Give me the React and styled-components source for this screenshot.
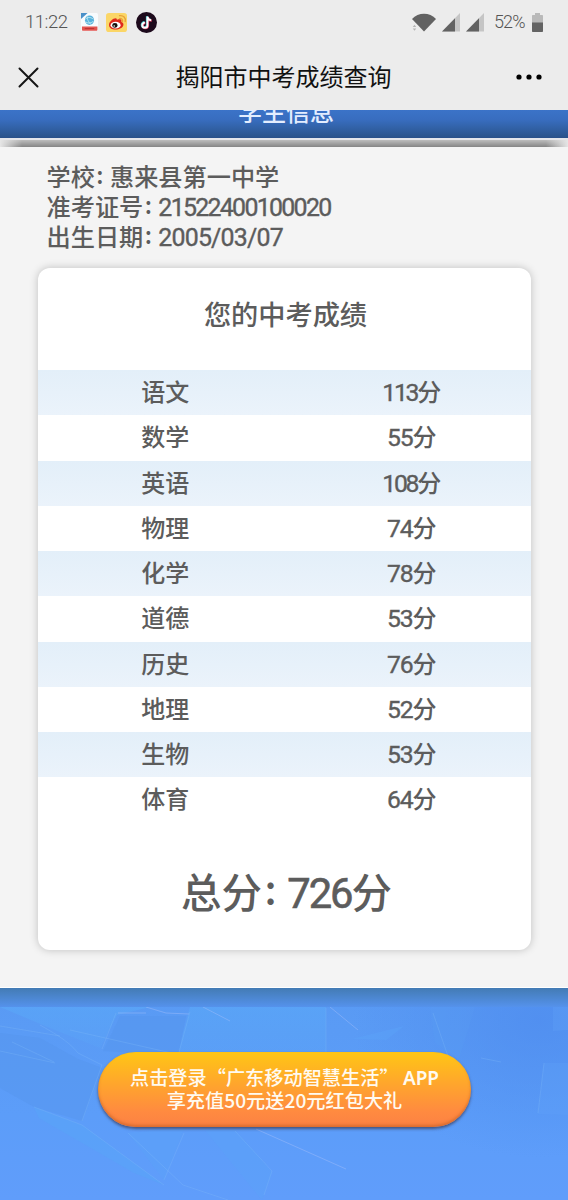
import React from 'react'
import styled, { createGlobalStyle } from 'styled-components'

const GlobalStyle = createGlobalStyle`
* { box-sizing: border-box; }
body {
  margin: 0;
  background: #f4f4f4;
  font-family: "Noto Sans CJK SC", "Noto Sans", sans-serif;
  color: #5c5c5c;
}
svg { display: block; flex: none; }
`

const Page = styled.div`
width: 568px;
height: 1200px;
display: flex;
flex-direction: column;
overflow: hidden;
`

const Top = styled.header`
height: 110px;
flex: none;
background: #ececec;
`

const StatusBar = styled.div`
height: 44px;
display: flex;
align-items: center;
justify-content: space-between;
padding: 0 25px 0 25px;
font-family: Roboto, sans-serif;
font-size: 18.5px;
font-weight: 300;
color: #555;
`

const StatusGroup = styled.div`
display: flex;
align-items: center;
gap: ${props => props.$gap};
`

const Clock = styled.span`
width: 47px;
line-height: 44px;
letter-spacing: -0.5px;
white-space: nowrap;
`

const Percent = styled.span`
width: 32px;
margin-left: 4px;
line-height: 44px;
font-size: 18px;
letter-spacing: -0.9px;
`

const TitleBar = styled.div`
height: 66px;
display: flex;
align-items: center;
justify-content: space-between;
padding: 0 26px 0 18px;
`

const PageTitle = styled.h1`
margin: -2px 0 0;
padding-left: 12px;
font-size: 24px;
font-weight: 400;
line-height: 64px;
color: #111;
`

const Banner = styled.div`
height: 30px;
flex: none;
overflow: hidden;
text-align: center;
background: linear-gradient(#3b73c8 0%, #386dbf 35%, #2b568f 92%, #29508a 100%);
border-bottom: 2px solid #e4e6ea;
color: #e3edff;
`

const BannerText = styled.div`
margin-top: -17px;
padding-left: 4px;
font-size: 24px;
font-weight: 500;
line-height: 36px;
`

const BannerShadow = styled.div`
height: 7px;
flex: none;
background:
  linear-gradient(90deg, #e6e6e6 0, rgba(230, 230, 230, 0) 22px, rgba(230, 230, 230, 0) 546px, #e6e6e6 100%),
  linear-gradient(#bdbdbd, #858585);
`

const Main = styled.main`
height: 841px;
flex: none;
padding: 14px 37px 0 38px;
background: #f4f4f4;
border-bottom: 1px solid #fff;
`

const Info = styled.div`
height: 107px;
padding-left: 8.5px;
font-size: 24.2px;
font-weight: 500;
line-height: 29px;
`

const InfoLine = styled.div`
height: 30px;
white-space: pre;
`

const Colon = styled.span`
position: relative;
top: -0.08em;
padding: 0 0.04em 0 0.06em;
`

const Digits = styled.span`
font-family: Roboto, sans-serif;
font-size: 1.03em;
font-weight: 400;
-webkit-text-stroke: 0.015em currentColor;
letter-spacing: ${props => props.$spacing || '-1.3px'};
`

const Card = styled.section`
height: 682px;
border-radius: 12px;
background: #fff;
box-shadow: 0 0 8px rgba(0, 0, 0, 0.22);
`

const CardTitle = styled.h2`
margin: 0;
height: 102px;
padding-left: 2px;
font-size: 27.2px;
font-weight: 500;
line-height: 90px;
text-align: center;
`

const Row = styled.div`
height: 45.25px;
display: flex;
font-size: 24px;
font-weight: 500;
line-height: 41px;
background: ${props => props.$striped ? 'linear-gradient(#e3eff9, #ebf3fb)' : '#fff'};
`

const Cell = styled.div`
flex: 1;
padding-left: 8px;
text-align: center;
`

const Total = styled.div`
margin-top: 38px;
padding-left: 4px;
font-size: 40.5px;
font-weight: 500;
line-height: 59px;
text-align: center;
white-space: pre;
`

const Footer = styled.footer`
position: relative;
height: 212px;
flex: none;
display: flex;
justify-content: center;
padding: 64px 0 0 1px;
background: linear-gradient(#599af3, #5c9df9 60%, #609dfb);
`

const Backdrop = styled.svg`
position: absolute;
left: 0;
top: 0;
`

const AppButton = styled.button`
position: relative;
width: 373px;
height: 75px;
padding: 0 0 1px;
border: 0;
border-radius: 38px;
background: linear-gradient(#ffc615 0%, #ffa62c 42%, #ff8a40 80%, #fb8144 100%);
box-shadow: 0 2px 3px rgba(60, 60, 90, 0.75), inset 0 -2px 3px rgba(190, 90, 30, 0.55);
font-family: inherit;
font-size: 19.2px;
font-weight: 500;
line-height: 23px;
color: #fffaf0;
white-space: nowrap;
`

const Latin = styled.span`
font-family: "Noto Sans", sans-serif;
font-size: 19px;
line-height: 1;
font-weight: 600;
`

const scores = [
  ['语文', 113],
  ['数学', 55],
  ['英语', 108],
  ['物理', 74],
  ['化学', 78],
  ['道德', 53],
  ['历史', 76],
  ['地理', 52],
  ['生物', 53],
  ['体育', 64],
]

const MobileIcon = () => (
  <svg width='17' height='18' viewBox='0 0 18 18' preserveAspectRatio='none'>
    <rect width='18' height='18' rx='1.5' fill='#f8fbfd' />
    <path d='M0 0h7L0 6z' fill='#4a90c8' />
    <circle cx='9' cy='7.2' r='4.8' fill='#58b2dc' />
    <path d='M5 6c2-2 5-2 8 0M5 9c3 1.6 5 1.4 8-.6M7 3.5c-1 3 1 5 3.5 8' fill='none' stroke='#c4ecf2' strokeWidth='.9' />
    <path d='M1 13.6h16.4v2.8c0 .8-.4 1.4-1.2 1.4h-14c-.8 0-1.2-.6-1.2-1.4z' fill='#e25550' />
    <path d='M4 15.6h10' stroke='#b9302f' />
  </svg>
)

const WeiboIcon = () => (
  <svg width='21' height='19' viewBox='0 0 21 20' preserveAspectRatio='none'>
    <rect width='21' height='20' rx='3' fill='#fbd667' />
    <path d='M3 12.5C3 9 7 5.4 9.6 5.4c1.6 0 1.3 1.9 1.3 1.9s4.4-1.9 4.6 1.1c0 .7-.2 1.2-.2 1.2 1.6.5 2.3 1.6 2.1 3-.5 3-4.2 4.7-7.7 4.7C6 17.3 3 15.7 3 12.5z' fill='#df2a1d' />
    <ellipse cx='9.6' cy='12.8' rx='5' ry='3.5' fill='#fff' />
    <circle cx='8.9' cy='13' r='2.6' fill='#17120f' />
    <circle cx='8.2' cy='13.6' r='.8' fill='#fff' />
    <path d='M13.5 5.8c2-.3 3.4 1.1 3 3M13.5 2.8c3.8-.6 6.7 2.4 5.7 6.2' fill='none' stroke='#e8a23a' strokeWidth='1.3' strokeLinecap='round' />
  </svg>
)

const DouyinIcon = () => (
  <svg width='21' height='21' viewBox='0 0 21 21'>
    <circle cx='10.5' cy='10.5' r='10.5' fill='#1d0a1c' />
    <g fill='none' strokeWidth='2.2'>
      <path d='M11 4.2v8.6a2.6 2.6 0 1 1-2.6-2.6M11 4.5c.3 2 1.7 3.3 3.7 3.4' stroke='#45cfd4' />
      <path d='M12 5v8.6a2.6 2.6 0 1 1-2.6-2.6M12 5.3c.3 2 1.7 3.3 3.7 3.4' stroke='#e2365c' />
      <path d='M11.5 4.6v8.6a2.6 2.6 0 1 1-2.6-2.6M11.5 4.9c.3 2 1.7 3.3 3.7 3.4' stroke='#fff' strokeWidth='1.9' />
    </g>
  </svg>
)

const WifiIcon = () => (
  <svg width='24' height='19' viewBox='0 0 25 19' preserveAspectRatio='none'>
    <path d='M0 6C6.5-1 18.5-1 25 6L12.5 18.5z' fill='#626262' />
    <path d='M.8 14L2.6 11.7 4.4 14zM.8 15.5h3.6L2.6 17.8z' fill='#b4b4b4' />
  </svg>
)

const SignalIcon = () => (
  <svg width='18' height='19' viewBox='0 0 18 19'>
    <path d='M0 18.5L18 0v18.5z' fill='#c5c5c5' />
    <path d='M0 18.5L13 5.2v13.3z' fill='#626262' />
  </svg>
)

const BatteryIcon = () => (
  <svg width='11' height='19' viewBox='0 0 11 19'>
    <path d='M3 0h5v2h2c.6 0 1 .4 1 1v7H0V3c0-.6.4-1 1-1h2z' fill='#b9b9b9' />
    <path d='M0 9.5h11V18c0 .6-.4 1-1 1H1c-.6 0-1-.4-1-1z' fill='#636363' />
  </svg>
)

const FooterArt = () => (
  <Backdrop width='568' height='212' viewBox='0 0 568 212'>
    <defs>
      <linearGradient id='edge' x1='0' y1='0' x2='0' y2='1'>
        <stop offset='0' stopColor='#437bb4' />
        <stop offset='1' stopColor='#5592ec' />
      </linearGradient>
      <radialGradient id='deep' cx='0.9' cy='0.15' r='0.65'>
        <stop offset='0' stopColor='#4f8def' stopOpacity='.8' />
        <stop offset='1' stopColor='#4f8def' stopOpacity='0' />
      </radialGradient>
      <linearGradient id='facet' x1='0' y1='0' x2='0' y2='1'>
        <stop offset='0' stopColor='#5aa8f8' stopOpacity='.6' />
        <stop offset='1' stopColor='#5aa8f8' stopOpacity='.2' />
      </linearGradient>
    </defs>
    <rect x='280' y='0' width='288' height='212' fill='url(#deep)' />
    <path d='M0 45l40 5 38 21 24 9-20 53-48-14L0 100z' fill='#5595ee' opacity='.5' />
    <path d='M0 19h150L117 27 100 60 50 40z' fill='url(#facet)' />
    <path d='M190 19h136v52H176z' fill='url(#facet)' />
    <path d='M120 28h66l-8 40-75-5z' fill='#5393ec' opacity='.35' />
    <path d='M430 19h45l-16 52-24-16z' fill='#5aa2f5' opacity='.2' />
    <path d='M34 119l48 18 82 60-30-12-95-55z' fill='#58a6f8' opacity='.5' />
    <path d='M128 145l56-5-20 52zM205 142h30l37 42-10 28z' fill='#5aa5f8' opacity='.3' />
    <path d='M553 19h15v23l-15 1zM544 75h24v52l-30-1z' fill='#5fa2f8' opacity='.3' />
    <path d='M352 51l52-13-18 14z' fill='#5da6f8' opacity='.35' />
    <g fill='none' stroke='#83bff9' strokeWidth='.8' opacity='.35'>
      <path d='M40 37c10 6 28 15 38 28l24 12M0 63l55 12M12 54l42 20M34 119l48 18 82 60M102 77l-20 56M0 38l60 10M70 42l106 24M116 25l-14 36M128 145l55 52 45 15M190 24l-12 44M184 145l-20 47M326 20v50M235 143l37 40-8 24M433 25l16 46M481 70l20 4M544 75l-6 50' />
    </g>
    <g fill='none' stroke='#a3bffb' opacity='.45'>
      <path d='M146 19l20 6 23 1M203 19l27 14M118 25h28M256 141l90 40M330 19l28 23' />
    </g>
    <rect width='568' height='19' fill='url(#edge)' />
  </Backdrop>
)

const App = () => (
  <Page>
    <GlobalStyle />
    <Top>
      <StatusBar>
        <StatusGroup $gap='8.7px'>
          <Clock>11:22</Clock>
          <MobileIcon />
          <WeiboIcon />
          <DouyinIcon />
        </StatusGroup>
        <StatusGroup $gap='6px'>
          <WifiIcon />
          <SignalIcon />
          <SignalIcon />
          <Percent>52%</Percent>
          <BatteryIcon />
        </StatusGroup>
      </StatusBar>
      <TitleBar>
        <svg width='21' height='21' viewBox='0 0 21 21'>
          <path d='M1.5 1.5l18 18M19.5 1.5l-18 18' stroke='#151515' strokeWidth='2' strokeLinecap='round' />
        </svg>
        <PageTitle>揭阳市中考成绩查询</PageTitle>
        <svg width='26' height='6' viewBox='0 0 26 6'>
          <circle cx='3' cy='3' r='2.6' />
          <circle cx='13' cy='3' r='2.6' />
          <circle cx='23' cy='3' r='2.6' />
        </svg>
      </TitleBar>
    </Top>
    <Banner>
      <BannerText>学生信息</BannerText>
    </Banner>
    <BannerShadow />
    <Main>
      <Info>
        <InfoLine>学校<Colon>:</Colon> 惠来县第一中学</InfoLine>
        <InfoLine>准考证号<Colon>:</Colon> <Digits $spacing='-1.7px'>21522400100020</Digits></InfoLine>
        <InfoLine>出生日期<Colon>:</Colon> <Digits $spacing='-0.8px'>2005/03/07</Digits></InfoLine>
      </Info>
      <Card>
        <CardTitle>您的中考成绩</CardTitle>
        {scores.map(([subject, score], i) => (
          <Row key={subject} $striped={i % 2 === 0}>
            <Cell>{subject}</Cell>
            <Cell><Digits $spacing={score > 99 ? '-2.2px' : '-1.2px'}>{score}</Digits>分</Cell>
          </Row>
        ))}
        <Total>总分<Colon>:</Colon> <Digits $spacing='-2px'>726</Digits>分</Total>
      </Card>
    </Main>
    <Footer>
      <FooterArt />
      <AppButton>
        点击登录“广东移动智慧生活” <Latin>APP</Latin><br />
        享充值50元送20元红包大礼
      </AppButton>
    </Footer>
  </Page>
)

export default App
